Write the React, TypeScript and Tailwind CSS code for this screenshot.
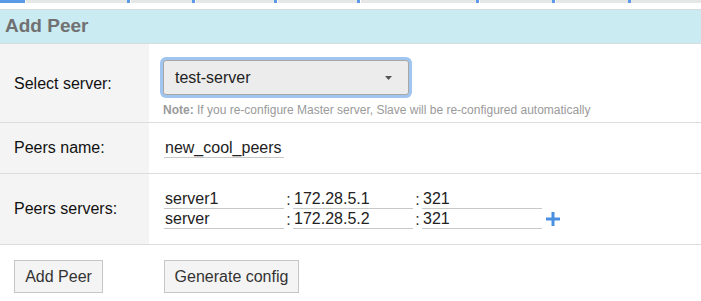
import React from "react";

const segs: Array<[number, string]> = [
  [25, "blue"],
  [102, "grey"],
  [3, "blue"],
  [62, "grey"],
  [3, "blue"],
  [79, "grey"],
  [3, "blue"],
  [80, "grey"],
  [3, "blue"],
  [116, "grey"],
  [3, "blue"],
  [73, "grey"],
  [3, "blue"],
  [73, "grey"],
  [3, "blue"],
];

function TopStrip() {
  return (
    <div className="flex h-[3px] bg-[#e6e8e8]">
      {segs.map(([w, c], i) =>
        c === "blue" ? (
          <div key={i} className="h-full bg-[#5b9ae6]" style={{ width: w }} />
        ) : (
          <div key={i} className="h-full bg-[#e6e8e8] border-l border-white" style={{ width: w }} />
        )
      )}
    </div>
  );
}

function Field({ value, w = "w-[120px]" }: { value: string; w?: string }) {
  return (
    <div className={`${w} h-[20px] border-b border-[#c8c8c8] text-[16px] leading-[19px] text-[#222] pl-[1px] whitespace-nowrap overflow-hidden`}>
      {value}
    </div>
  );
}

function Colon() {
  return <span className="w-[9px] text-center text-[16px] leading-[19px] text-[#333]">:</span>;
}

function Plus() {
  return (
    <svg width="14" height="14" viewBox="0 0 14 14" className="ml-[4px]">
      <rect x="5.5" y="0" width="3" height="14" fill="#4a90e2" />
      <rect x="0" y="5.5" width="14" height="3" fill="#4a90e2" />
    </svg>
  );
}

export default function App() {
  return (
    <div className="w-[701px] h-[301px] overflow-hidden bg-white font-['Liberation_Sans',Arial,sans-serif] text-[#111]">
      <TopStrip />
      <div className="mt-[6px] h-[35px] border-t border-b border-[#d6dcdd] bg-[#c9ebf1] flex items-center pl-[5px]">
        <span className="text-[19px] font-bold text-[#717171]">Add Peer</span>
      </div>

      {/* Row 1 */}
      <div className="flex h-[79px] border-b border-[#dddddd]">
        <div className="w-[149px] bg-[#f4f4f4] flex items-center pl-[14px] text-[16px] pt-[2px]">Select server:</div>
        <div className="flex-1 pl-[14px] pt-[16px]">
          <div className="w-[246px] h-[35px] rounded-[3px] border border-[#a8a8a8] bg-[#ececec] ring-[3px] ring-[#a0c6ef] flex items-center justify-between pl-[11px] pr-[16px]">
            <span className="text-[16px] text-[#222]">test-server</span>
            <svg width="7" height="4" viewBox="0 0 7 4">
              <path d="M0 0 L7 0 L3.5 4 Z" fill="#555" />
            </svg>
          </div>
          <div className="mt-[8px] text-[12px] leading-[14px] text-[#9a9a9a] whitespace-nowrap">
            <span className="font-bold">Note:</span> If you re-configure Master server, Slave will be re-configured automatically
          </div>
        </div>
      </div>

      {/* Row 2 */}
      <div className="flex h-[51px] border-b border-[#dddddd]">
        <div className="w-[149px] bg-[#f4f4f4] flex items-center pl-[14px] text-[16px]">Peers name:</div>
        <div className="flex-1 pl-[14px] flex items-center">
          <div className="ml-[1px]">
            <Field value="new_cool_peers" />
          </div>
        </div>
      </div>

      {/* Row 3 */}
      <div className="flex h-[71px] border-b border-[#dddddd]">
        <div className="w-[149px] bg-[#f4f4f4] flex items-center pl-[14px] text-[16px]">Peers servers:</div>
        <div className="flex-1 pl-[14px] flex items-center">
          <div className="ml-[1px] flex flex-col">
            <div className="flex items-center">
              <Field value="server1" />
              <Colon />
              <Field value="172.28.5.1" />
              <Colon />
              <Field value="321" />
            </div>
            <div className="flex items-center">
              <Field value="server" />
              <Colon />
              <Field value="172.28.5.2" />
              <Colon />
              <Field value="321" />
              <Plus />
            </div>
          </div>
        </div>
      </div>

      {/* Buttons */}
      <div className="flex pt-[15px]">
        <div className="w-[149px] pl-[14px]">
          <button className="w-[89px] h-[33px] border border-[#c6c6c6] bg-[#f4f4f4] text-[16px] text-[#333]">Add Peer</button>
        </div>
        <div className="pl-[15px]">
          <button className="w-[135px] h-[33px] border border-[#c6c6c6] bg-[#f4f4f4] text-[16px] text-[#333]">Generate config</button>
        </div>
      </div>
    </div>
  );
}
